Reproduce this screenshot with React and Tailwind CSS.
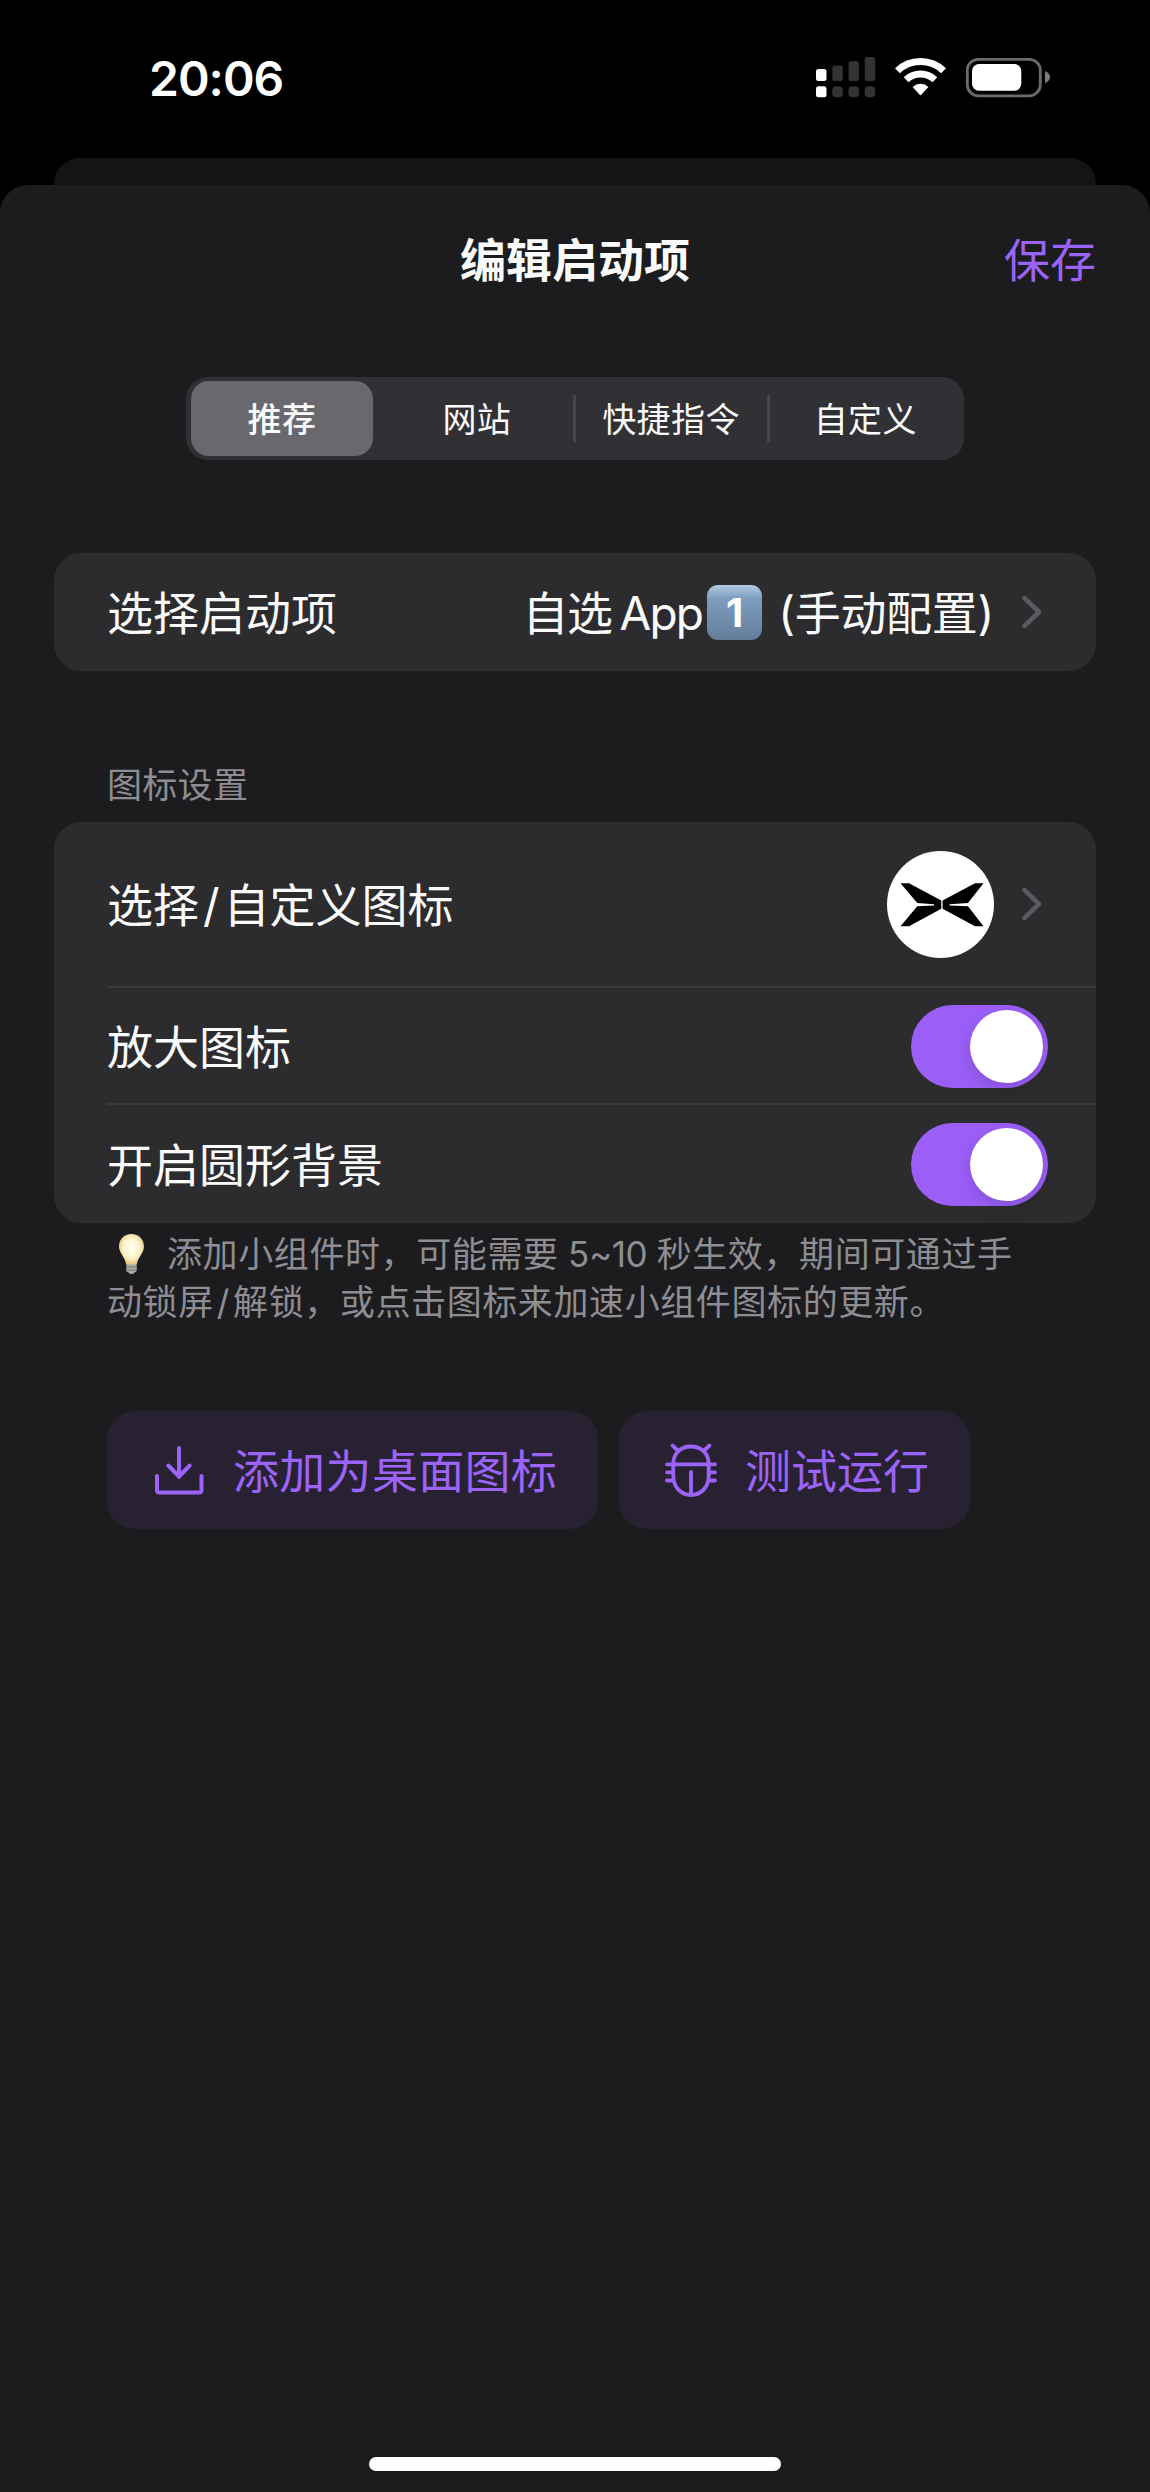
import React, { useState } from 'react';

const TABS = ['推荐', '网站', '快捷指令', '自定义'];

const StatusBar = () => {
  return (
    <div className="flex h-[158px] items-start justify-between pl-[149px] pr-[100px]">
      <div className="mt-[55px] text-[48px] leading-[48px] font-semibold tracking-[-1px] text-white">20:06</div>
      <svg className="mt-[54px] h-[46px] w-[236px]" viewBox="0 0 236 46" fill="none">
        {/* Dual SIM signal */}
        <rect x="2" y="15" width="10.5" height="12" rx="2.5" fill="#fff" />
        <rect x="18.3" y="11.5" width="10.5" height="15.5" rx="2.5" fill="#333" />
        <rect x="34.5" y="7.3" width="10.5" height="19.7" rx="2.5" fill="#333" />
        <rect x="50.7" y="3" width="10.5" height="24" rx="2.5" fill="#333" />
        <rect x="2" y="32.3" width="10.5" height="11" rx="2.5" fill="#fff" />
        <rect x="18.3" y="32.3" width="10.5" height="11" rx="4" fill="#333" />
        <rect x="34.5" y="32.3" width="10.5" height="11" rx="4" fill="#333" />
        <rect x="50.7" y="32.3" width="10.5" height="11" rx="4" fill="#333" />
        {/* Wifi */}
        <path d="M83.4 16.8 A33.5 33.5 0 0 1 129.6 16.8" stroke="#fff" strokeWidth="7" />
        <path d="M92.1 25.7 A21 21 0 0 1 120.9 25.7" stroke="#fff" strokeWidth="6.8" />
        <path d="M98.6 32.9 A11.6 11.6 0 0 1 114.4 32.9 L107.3 40.8 Q106.5 41.6 105.7 40.8 Z" fill="#fff" />
        {/* Battery */}
        <rect x="153.3" y="5.3" width="73" height="36.5" rx="11" stroke="#6b6b6b" strokeWidth="2.8" />
        <rect x="158" y="10" width="49.3" height="26.8" rx="7" fill="#fff" />
        <path d="M231 17 Q236 19.2 236 23 Q236 26.8 231 29.3 Z" fill="#7a7a7a" />
      </svg>
    </div>
  );
};

const Chevron = () => {
  return (
    <svg className="h-[34px] w-[22px] shrink-0" viewBox="0 0 22 34" fill="none">
      <path d="M3.5 3.2 L18 17 L3.5 30.8" stroke="#5b5b5f" strokeWidth="4.6" strokeLinecap="round" strokeLinejoin="round" />
    </svg>
  );
};

const Toggle = ({ checked, onChange }) => {
  return (
    <button
      role="switch"
      aria-checked={checked}
      onClick={() => onChange(!checked)}
      className={`flex h-[83px] w-[137px] shrink-0 items-center rounded-full px-[5px] ${checked ? 'justify-end bg-[#9b5ff8]' : 'justify-start bg-[#39393d]'}`}
    >
      <span className="h-[73px] w-[73px] rounded-full bg-white shadow-[0_6px_16px_rgba(0,0,0,0.15)]"></span>
    </button>
  );
};

const AppIcon = () => {
  return (
    <svg className="h-[107px] w-[107px] shrink-0" viewBox="0 0 107 107">
      <circle cx="53.5" cy="53.5" r="53.5" fill="#fff" />
      <g fill="#000">
        <path d="M13.5 32.3 H22 L54.3 49.5 V57.8 L22 75.3 H13.5 L30.3 55.3 L47 54.4 V53.3 L30.3 52 Z" />
        <path d="M96.5 32.3 H88 L55.6 49.5 V57.8 L88 75.3 H96.5 L81 55.3 L62.5 54.4 V53.3 L81 52 Z" />
      </g>
    </svg>
  );
};

const Bulb = () => {
  return (
    <svg className="mx-[11px] h-[42px] w-[27px] shrink-0" viewBox="0 0 27 42">
      <defs>
        <radialGradient id="glow" cx="0.5" cy="0.45" r="0.6">
          <stop offset="0" stopColor="#fffdf0" />
          <stop offset="0.55" stopColor="#fcf3cb" />
          <stop offset="1" stopColor="#dcb968" />
        </radialGradient>
      </defs>
      <path d="M13.5 1 C6 1 1 6.5 1 13.5 C1 19.5 6.5 23.5 8 30.5 Q8.3 32 10 32 H17 Q18.7 32 19 30.5 C20.5 23.5 26 19.5 26 13.5 C26 6.5 21 1 13.5 1 Z" fill="url(#glow)" />
      <path d="M8.3 31.5 H18.7 V37.5 Q18.5 39 16.5 39.5 Q15.5 41 13.5 41 Q11.5 41 10.5 39.5 Q8.5 39 8.3 37.5 Z" fill="#a9a9a6" />
      <path d="M8.5 34 H18.5 M8.7 37 H18.3" stroke="#77776f" strokeWidth="0.9" />
    </svg>
  );
};

const DownloadIcon = () => {
  return (
    <svg className="h-[50px] w-[50px] shrink-0" viewBox="0 0 50 50" fill="none" stroke="#9b63f7" strokeWidth="4" strokeLinecap="round" strokeLinejoin="round">
      <path d="M25 3 V32 M14.3 20.5 L25 31.5 L35.7 20.5" />
      <path d="M3 31 V45 Q3 47.5 5.5 47.5 H44.5 Q47.5 47.5 47.5 45 V31" />
    </svg>
  );
};

const BugIcon = () => {
  return (
    <svg className="h-[56px] w-[54px] shrink-0" viewBox="0 0 54 56" fill="none" stroke="#9b63f7" strokeWidth="3.8" strokeLinecap="round">
      <path d="M9.3 28 V22 C9.3 11 17 4.5 27 4.5 C37 4.5 44.7 11 44.7 22 V34 C44.7 45 37 53 27 53 C17 53 9.3 45 9.3 34 Z" />
      <path d="M3 22.3 H51 M27 30 V52" />
      <path d="M3 30.3 H8 M3 38.5 H9 M46 30.3 H51 M45 38.5 H51" />
      <path d="M8.5 3.5 L14.3 9 M45.5 3.5 L39.7 9" />
    </svg>
  );
};

const App = () => {
  const [tab, setTab] = useState(0);
  const [zoomed, setZoomed] = useState(true);
  const [rounded, setRounded] = useState(true);

  return (
    <div lang="zh-CN" className="flex h-[2492px] w-[1150px] flex-col overflow-hidden bg-black font-['Inter','Noto_Sans_CJK_SC',sans-serif] text-[46px] leading-[46px] text-[#fafafa]">
      <StatusBar />

      {/* Sheet behind */}
      <div className="mx-[54px] h-[27px] shrink-0 rounded-t-[26px] bg-[#141414]"></div>

      <div className="flex flex-1 flex-col rounded-t-[28px] bg-[#1c1c1e]">
        <div className="grid h-[152px] grid-cols-3 items-center px-[54px] pb-[3px]">
          <span></span>
          <h1 className="text-center font-semibold whitespace-nowrap">编辑启动项</h1>
          <button className="justify-self-end text-[#9b63f7]">保存</button>
        </div>

        {/* Tabs */}
        <div className="mx-auto mt-[40px] grid h-[83px] w-[778px] grid-cols-4 items-center rounded-[22px] bg-[#313135] pl-px">
          {TABS.map((name, i) => (
            <div key={name} className={`flex h-[47px] items-center border-r-[3px] ${i === 1 || i === 2 ? 'border-[#47474b]' : 'border-transparent'}`}>
              <button
                onClick={() => setTab(i)}
                className={`h-[75px] rounded-[18px] pt-[2px] text-[34px] leading-[34px] tracking-[0.5px] whitespace-nowrap ${tab === i ? 'ml-[4px] w-[182px] bg-[#69686e] font-medium' : 'w-full'}`}
              >
                {name}
              </button>
            </div>
          ))}
        </div>

        {/* Launch item */}
        <div className="mx-[54px] mt-[93px] flex h-[118px] items-center rounded-[27px] bg-[#2c2c2e] pr-[53px] pl-[53px]">
          <span className="flex-1 pt-[2px]">选择启动项</span>
          <span className="flex items-center">
            <span className="pt-[2px] tracking-[-1.5px]">自选</span>
            <span className="ml-[8px] pt-[2px] tracking-[-1.8px]">App</span>
            <span className="ml-[5px] flex h-[55px] w-[55px] items-center justify-center rounded-[11px] bg-linear-to-b from-[#b4cbe2] via-[#7d9dbf] via-25% to-[#657d9b] pt-[2px] text-[40px] font-bold text-white">1</span>
            <span className="ml-[16px] pt-[2px] tracking-[-0.3px]">(手动配置)</span>
          </span>
          <span className="ml-[27px] flex">
            <Chevron />
          </span>
        </div>

        <div className="mt-[95px] ml-[107px] text-[35px] leading-[38px] tracking-[0.3px] text-[#8d8d93]">图标设置</div>

        {/* Icon settings */}
        <div className="mx-[54px] mt-[18px] flex flex-col rounded-[27px] bg-[#2c2c2e] pl-[53px]">
          <div className="flex h-[166px] items-center border-b-2 border-[#39393b] pr-[53px]">
            <span className="flex-1 pt-[2px]">
              选择<span className="mx-[4px]">/</span>自定义图标
            </span>
            <AppIcon />
            <span className="ml-[27px] flex">
              <Chevron />
            </span>
          </div>
          <div className="flex h-[117px] items-center border-b-2 border-[#39393b] pt-[2px] pr-[48px]">
            <span className="flex-1">放大图标</span>
            <Toggle checked={zoomed} onChange={setZoomed} />
          </div>
          <div className="flex h-[118px] items-center pr-[48px]">
            <span className="flex-1 pt-[2px]">开启圆形背景</span>
            <Toggle checked={rounded} onChange={setRounded} />
          </div>
        </div>

        <div className="mt-[7px] ml-[107px] text-[35px] leading-[48px] tracking-[0.6px] whitespace-nowrap text-[#8d8d93]">
          <div className="flex items-center">
            <Bulb />
            <span className="ml-[11px]">
              添加小组件时，可能需要<span className="tracking-[-0.4px]"> 5~10 </span>秒生效，期间可通过手
            </span>
          </div>
          <div>
            动锁屏<span className="mx-[3px]">/</span>解锁，或点击图标来加速小组件图标的更新。
          </div>
        </div>

        {/* Actions */}
        <div className="mt-[85px] ml-[107px] flex gap-[21px] text-[#9b63f7]">
          <button className="flex h-[118px] w-[491px] items-center rounded-[28px] bg-[#272132] pl-[47px]">
            <DownloadIcon />
            <span className="ml-[29px] pt-[2px] tracking-[0.3px]">添加为桌面图标</span>
          </button>
          <button className="flex h-[118px] w-[351px] items-center rounded-[28px] bg-[#272132] pl-[45px]">
            <BugIcon />
            <span className="ml-[27px] pt-[2px]">测试运行</span>
          </button>
        </div>

        {/* Home indicator */}
        <div className="mx-auto mt-auto mb-[21px] h-[14px] w-[412px] rounded-full bg-white"></div>
      </div>
    </div>
  );
};

export default App;
